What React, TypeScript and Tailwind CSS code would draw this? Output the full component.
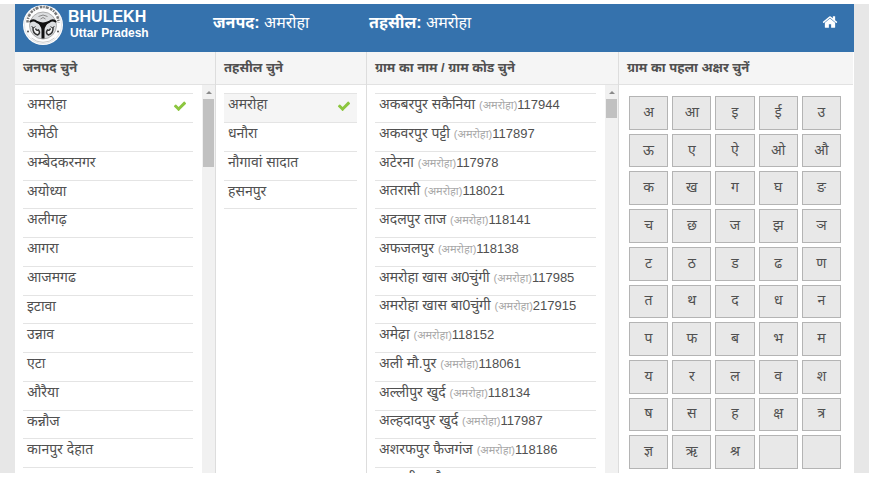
import type { ReactNode } from 'react';

const districts = [
	'अमरोहा', 'अमेठी', 'अम्बेदकरनगर', 'अयोध्या', 'अलीगढ़', 'आगरा', 'आजमगढ',
	'इटावा', 'उन्नाव', 'एटा', 'औरैया', 'कन्नौज', 'कानपुर देहात',
];

const tehsils = ['अमरोहा', 'धनौरा', 'नौगावां सादात', 'हसनपुर'];

const villages = [
	{ name: 'अकबरपुर सकैनिया', code: '117944' },
	{ name: 'अकवरपुर पट्टी', code: '117897' },
	{ name: 'अटेरना', code: '117978' },
	{ name: 'अतरासी', code: '118021' },
	{ name: 'अदलपुर ताज', code: '118141' },
	{ name: 'अफजलपुर', code: '118138' },
	{ name: 'अमरोहा खास अ0चुंगी', code: '117985' },
	{ name: 'अमरोहा खास बा0चुंगी', code: '217915' },
	{ name: 'अमेढ़ा', code: '118152' },
	{ name: 'अली मौ.पुर', code: '118061' },
	{ name: 'अल्लीपुर खुर्द', code: '118134' },
	{ name: 'अल्हदादपुर खुर्द', code: '117987' },
	{ name: 'अशरफपुर फैजगंज', code: '118186' },
	{ name: 'असगरीपुर मैसरा', code: '118074' },
];

const letters = [
	'अ', 'आ', 'इ', 'ई', 'उ',
	'ऊ', 'ए', 'ऐ', 'ओ', 'औ',
	'क', 'ख', 'ग', 'घ', 'ङ',
	'च', 'छ', 'ज', 'झ', 'ञ',
	'ट', 'ठ', 'ड', 'ढ', 'ण',
	'त', 'थ', 'द', 'ध', 'न',
	'प', 'फ', 'ब', 'भ', 'म',
	'य', 'र', 'ल', 'व', 'श',
	'ष', 'स', 'ह', 'क्ष', 'त्र',
	'ज्ञ', 'ऋ', 'श्र', '', '',
];

function Emblem() {
	return (
		<svg viewBox="0 0 80 80" className="size-10 shrink-0" aria-hidden="true">
			<circle cx="40" cy="40" r="40" fill="#fdfdfd" />
			<circle cx="40" cy="40" r="37" fill="none" stroke="#c9ccd0" strokeWidth="1" />
			<circle cx="40" cy="41" r="27" fill="#dcdee0" stroke="#999" strokeWidth="1.5" />
			{/* Lettering ring */}
			<path d="M9 35 A31 31 0 0 1 71 35" fill="none" stroke="#777" strokeWidth="5" strokeDasharray="5 2 3 2 6 3" />
			<circle cx="10" cy="53" r="2" fill="#555" />
			<circle cx="70" cy="53" r="2" fill="#555" />
			<path d="M17 66 A35 35 0 0 0 63 66" fill="none" stroke="#bbb" strokeWidth="1.5" />
			{/* Bow and river confluence */}
			<path d="M15 33 Q21 28 28 34 Q34 37 40 37 Q46 37 52 34 Q59 28 65 33" fill="none" stroke="#111" strokeWidth="4" strokeLinecap="round" />
			<path d="M25 32 Q36 40 37 50 L37 67 H43 L43 50 Q44 40 55 32 Q46 37 40 37 Q34 37 25 32" fill="#111" />
			<path d="M31 23 Q40 17 49 23 M35 28 Q40 22 45 28" fill="none" stroke="#888" strokeWidth="2" />
			{/* Fish */}
			<path d="M20 44 Q19 57 29 60 Q36 56 31 50 Q27 52 25 47" fill="#f4f4f4" stroke="#333" strokeWidth="3" />
			<path d="M60 44 Q61 57 51 60 Q44 56 49 50 Q53 52 55 47" fill="#f4f4f4" stroke="#333" strokeWidth="3" />
			<path d="M17 42 L21 46 L25 43 M63 42 L59 46 L55 43" fill="none" stroke="#444" strokeWidth="2" />
		</svg>
	);
}

function HomeIcon() {
	return (
		<svg viewBox="0 0 1792 1792" className="size-4" fill="currentColor" aria-hidden="true">
			<path d="M1472 992v480q0 26-19 45t-45 19h-384v-384h-256v384h-384q-26 0-45-19t-19-45v-480q0-1 .5-3t.5-3l575-474 575 474q1 2 1 6zm223-69l-62 74q-8 9-21 11h-3q-13 0-21-7l-692-577-692 577q-12 8-24 7-13-2-21-11l-62-74q-8-10-7-23.5t11-21.5l719-599q32-26 76-26t76 26l244 204v-195q0-14 9-23t23-9h192q14 0 23 9t9 23v408l219 182q10 8 11 21.5t-7 23.5z" />
		</svg>
	);
}

function CheckIcon() {
	return (
		<svg viewBox="0 0 1792 1792" className="mb-1 size-3.5 text-[#8cc63f]" fill="currentColor" aria-hidden="true">
			<path d="M1671 566q0 40-28 68l-724 724-136 136q-28 28-68 28t-68-28l-136-136-362-362q-28-28-28-68t28-68l136-136q28-28 68-28t68 28l294 295 656-657q28-28 68-28t68 28l136 136q28 28 28 68z" />
		</svg>
	);
}

function Column({ title, children }: { title: string; children: ReactNode }) {
	return (
		<section className="flex min-h-0 min-w-0 flex-col border-r border-[#dddddd] last:border-white">
			<h2 className="h-[33px] shrink-0 border-b border-[#e2e2e2] bg-[#f5f5f5] px-2 text-[13px] leading-8 font-bold whitespace-nowrap">
				{title}
			</h2>
			<div className="flex min-h-0 flex-1">{children}</div>
		</section>
	);
}

function List({ children }: { children: ReactNode }) {
	return <ul className="min-w-0 flex-1 overflow-hidden pt-2 pr-[9px] pl-2">{children}</ul>;
}

function Row({ selected, shaded, children }: { selected?: boolean; shaded?: boolean; children: ReactNode }) {
	return (
		<li className={`h-[29px] border-b border-[#e4e4e4] first:h-[30px] first:border-t nth-[4n]:h-7 ${shaded ? 'bg-[#f5f5f5]' : ''}`}>
			<button type="button" className="flex h-full w-full items-center justify-between pr-1.5 pl-1 text-left text-[14px] leading-5 whitespace-nowrap">
				<span className="pb-2">{children}</span>
				{selected && <CheckIcon />}
			</button>
		</li>
	);
}

function Scrollbar({ thumb }: { thumb: string }) {
	return (
		<div className="flex w-[13px] shrink-0 flex-col items-center bg-[#f1f1f1]" aria-hidden="true">
			<svg viewBox="0 0 12 14" className="h-3.5 w-3 shrink-0">
				<path d="M3 9 L6 6 L9 9 Z" fill="#8a8a8a" />
			</svg>
			<div className={`w-[11px] bg-[#c1c1c1] ${thumb}`} />
		</div>
	);
}

export default function App() {
	return (
		<div className="h-screen bg-white py-1 font-['Liberation_Sans','Noto_Sans','Noto_Sans_Devanagari',sans-serif] text-[#505050]">
			<div className="h-full bg-[#e7e7e7] px-[15px]">
				<div className="flex h-full flex-col bg-white">
					<header className="flex h-12 shrink-0 bg-[#3572ad] pl-2 text-white">
						<div className="flex w-[190px] gap-[5px] pt-px">
							<Emblem />
							<div className="pt-1 font-bold">
								<h1 className="text-[16px] leading-4">BHULEKH</h1>
								<p className="pl-0.5 text-[12px] leading-4">Uttar Pradesh</p>
							</div>
						</div>
						<p className="w-[156px] pt-[7px] text-[16px] leading-6">
							<b>जनपद:</b> अमरोहा
						</p>
						<p className="flex-1 pt-[7px] text-[16px] leading-6">
							<b>तहसील:</b> अमरोहा
						</p>
						<a href="#home" aria-label="Home" className="pt-[10px] pr-4">
							<HomeIcon />
						</a>
					</header>

					<main className="grid min-h-0 flex-1 grid-cols-[201fr_151fr_252fr_235fr] grid-rows-[minmax(0,1fr)]">
						<Column title="जनपद चुने">
							<List>
								{districts.map((name, i) => (
									<Row key={name} selected={i === 0}>{name}</Row>
								))}
							</List>
							<Scrollbar thumb="h-[68px]" />
						</Column>

						<Column title="तहसील चुने">
							<List>
								{tehsils.map((name, i) => (
									<Row key={name} selected={i === 0} shaded={i === 0}>{name}</Row>
								))}
							</List>
						</Column>

						<Column title="ग्राम का नाम / ग्राम कोड चुने">
							<List>
								{villages.map((v) => (
									<Row key={v.name}>
										{v.name} <small className="text-[11px] text-[#a8a8a8]">(अमरोहा)</small>
										<span className="text-[13px]">{v.code}</span>
									</Row>
								))}
							</List>
							<Scrollbar thumb="h-[19px]" />
						</Column>

						<Column title="ग्राम का पहला अक्षर चुनें">
							<div className="grid flex-1 grid-cols-5 grid-rows-10 gap-1 pt-[11px] pr-3 pb-1 pl-2.5">
								{letters.map((letter, i) => (
									<button key={i} type="button" className="min-h-0 border border-[#b4b4b4] bg-[#e8e8e8] pb-0.5 text-[14px] leading-5">
										{letter}
									</button>
								))}
							</div>
						</Column>
					</main>
				</div>
			</div>
		</div>
	);
}
